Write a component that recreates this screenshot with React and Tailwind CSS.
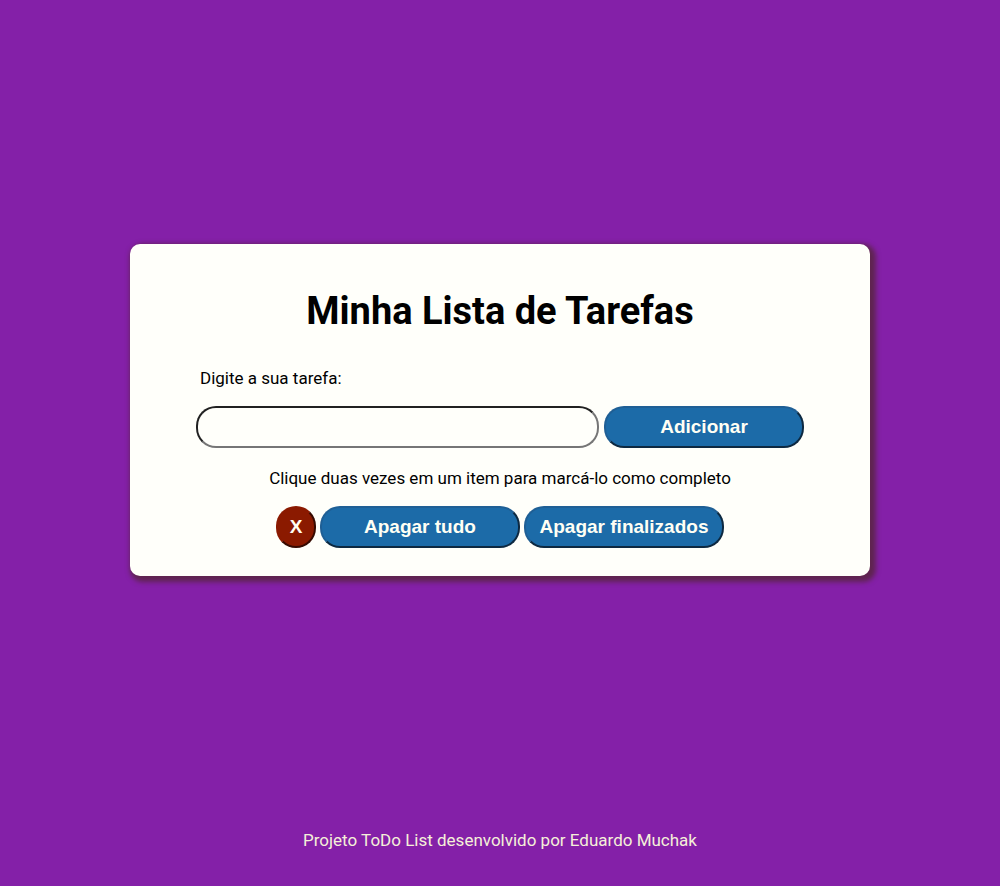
import { useState } from "react";

const pill =
  "h-[42px] rounded-[20px] border-2 border-[#1f5f95] bg-[#1c6ba8] text-[19px] leading-[22px] font-bold text-[#fffff4] font-['Liberation_Sans',sans-serif]";

export default function App() {
  const [task, setTask] = useState("");
  const [tasks, setTasks] = useState([]);

  const add = (e) => {
    e.preventDefault();
    if (!task.trim()) return;
    setTasks([...tasks, { text: task, done: false }]);
    setTask("");
  };
  const toggle = (i) =>
    setTasks(tasks.map((t, n) => (n === i ? { ...t, done: !t.done } : t)));

  return (
    <div className="flex min-h-screen flex-col bg-[#8420a8] px-4 font-['Roboto',sans-serif] text-[17px] text-black">
      <main className="flex grow flex-col items-center justify-center pb-2">
        <section className="w-full max-w-[740px] rounded-[10px] bg-[#fffffa] px-6 pt-10 pb-7 shadow-[3px_3px_5px_3px_#5f2450]">
          <h1 className="text-center text-[38px] leading-[54px] font-bold">Minha Lista de Tarefas</h1>
          <form onSubmit={add} className="mx-auto mt-7 max-w-[608px]">
            <label htmlFor="task" className="block pl-1 leading-6">Digite a sua tarefa:</label>
            <div className="mt-4 flex gap-[5px]">
              <input
                id="task"
                value={task}
                onChange={(e) => setTask(e.target.value)}
                className="h-[42px] min-w-0 grow rounded-[20px] border-2 border-[#767676] bg-transparent px-4 [border-style:inset]"
              />
              <button type="submit" className={`${pill} w-[200px] [border-style:outset]`}>Adicionar</button>
            </div>
          </form>
          <p className="mt-[18px] text-center leading-6">Clique duas vezes em um item para marcá-lo como completo</p>
          <ol className="mx-auto max-w-[608px] list-inside list-decimal">
            {tasks.map((t, i) => (
              <li key={i} onDoubleClick={() => toggle(i)} className={t.done ? "line-through" : ""}>{t.text}</li>
            ))}
          </ol>
          <div className="mt-4 flex flex-wrap justify-center gap-1">
            <button
              type="button"
              onClick={() => setTasks(tasks.slice(0, -1))}
              className="h-[42px] w-10 rounded-[20px] border-2 border-[#8b1a00] bg-[#8b1a00] font-['Liberation_Sans',sans-serif] text-[19px] leading-[22px] font-bold text-[#fffff4] [border-style:outset]"
            >
              X
            </button>
            <button type="button" onClick={() => setTasks([])} className={`${pill} w-[200px] [border-style:outset]`}>Apagar tudo</button>
            <button type="button" onClick={() => setTasks(tasks.filter((t) => !t.done))} className={`${pill} w-[200px] [border-style:outset]`}>Apagar finalizados</button>
          </div>
        </section>
      </main>
      <footer className="pb-[34px] text-center leading-6 text-[#f5f0d8]">Projeto ToDo List desenvolvido por Eduardo Muchak</footer>
    </div>
  );
}
